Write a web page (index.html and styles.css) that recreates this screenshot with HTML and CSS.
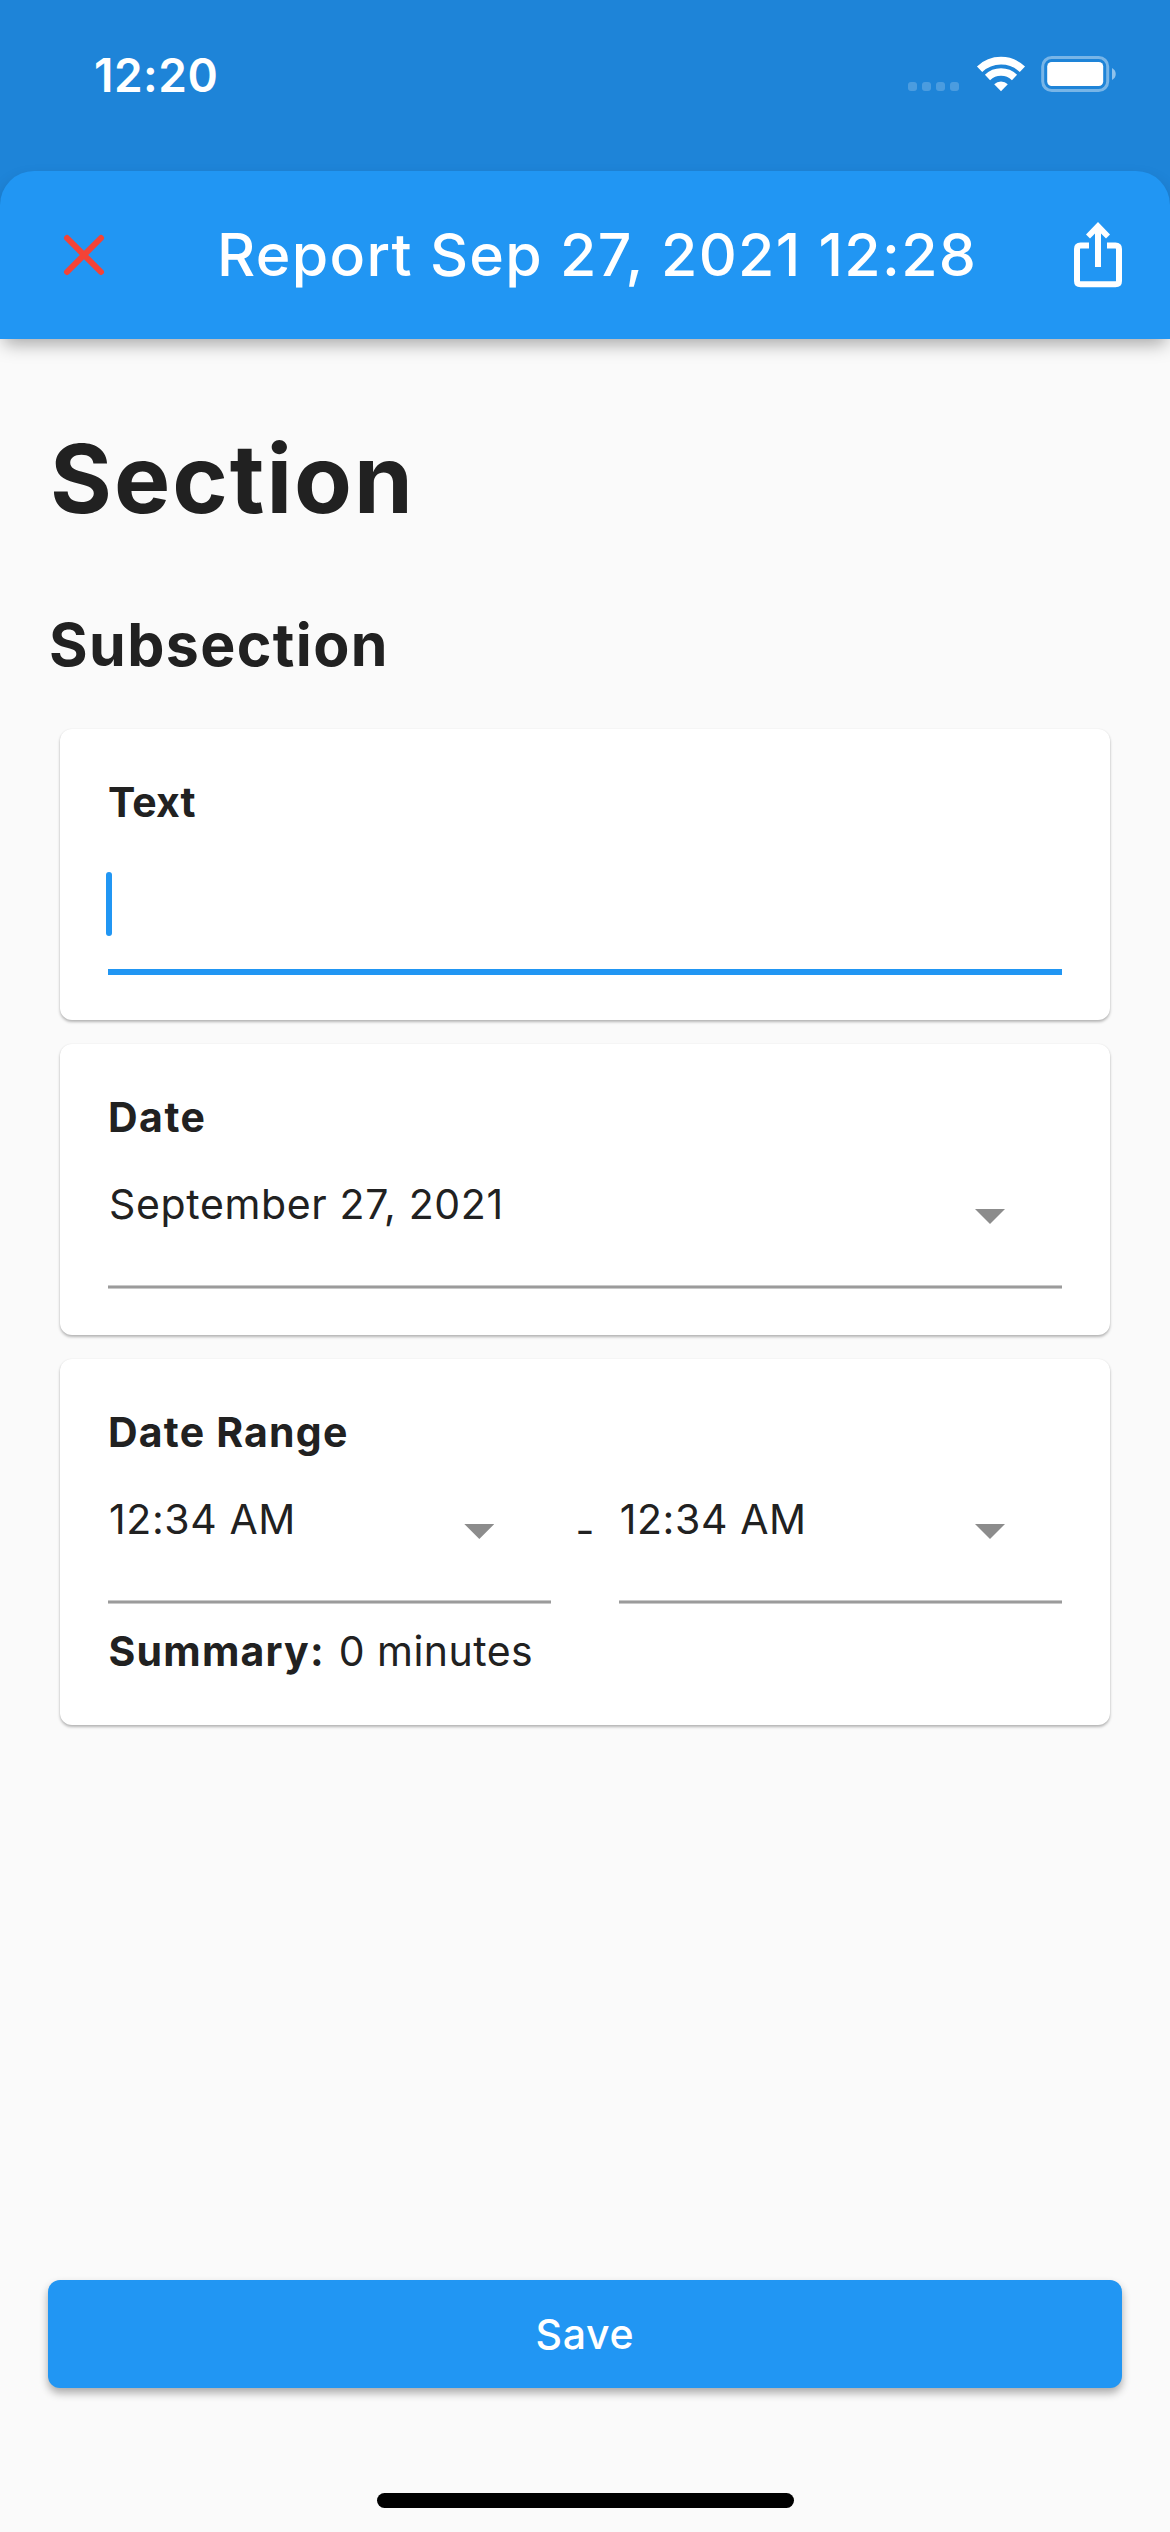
FILE: index.html
```html
<!DOCTYPE html>
<html lang="en">
<head>
<meta charset="utf-8">
<title>Report</title>
<link rel="stylesheet" href="styles.css">
</head>
<body>
<div class="screen">
  <div class="status-bar">
    <span class="clock">12:20</span>
    <div class="status-icons">
      <div class="signal"><i></i><i></i><i></i><i></i></div>
      <svg class="wifi" width="50" height="38" viewBox="0 0 50 38" fill="none" stroke="#fff">
        <path d="M3.6 14.2 A31 31 0 0 1 46.4 14.2" stroke-width="7.6"/>
        <path d="M11.5 22.5 A19.5 19.5 0 0 1 38.5 22.5" stroke-width="7.4"/>
        <path d="M18.2 29.3 A9.6 9.6 0 0 1 31.8 29.3 L25 36.2 Z" fill="#fff" stroke="none"/>
      </svg>
      <svg class="battery" width="76" height="38" viewBox="0 0 76 38">
        <rect x="1.7" y="2.5" width="65" height="33" rx="9" fill="none" stroke="#fff" stroke-opacity=".4" stroke-width="3"/>
        <rect x="6.2" y="7" width="56" height="24" rx="4.5" fill="#fff"/>
        <path d="M71 13 C76 15.5 76 22.5 71 25 Z" fill="#fff" fill-opacity=".5"/>
      </svg>
    </div>
  </div>
  <div class="sheet">
    <header class="app-bar">
      <svg class="close" width="44" height="44" viewBox="0 0 44 44" stroke="#f44336" stroke-width="6" stroke-linecap="round"><path d="M5 5 L39 39 M39 5 L5 39"/></svg>
      <h1 class="title">Report Sep 27, 2021 12:28</h1>
      <svg class="share" width="50" height="68" viewBox="0 0 50 68">
        <path d="M16 24.5 H7.5 Q4 24.5 4 28 V60 Q4 63.2 7.5 63.2 H42.5 Q46 63.2 46 60 V28 Q46 24.5 42.5 24.5 H34" fill="none" stroke="#fff" stroke-width="6"/>
        <path d="M25 1 L37 13.5 L33 17.5 L28 12.5 V46 H22 V12.5 L17 17.5 L13 13.5 Z" fill="#fff"/>
      </svg>
    </header>
    <main class="content">
      <h2 class="section">Section</h2>
      <h3 class="subsection">Subsection</h3>
      <div class="cards">
        <section class="card">
          <div class="label text-label">Text</div>
          <div class="field input"><span class="cursor"></span></div>
        </section>
        <section class="card">
          <div class="label date-label">Date</div>
          <div class="field select"><span class="value date-value">September 27, 2021</span><span class="arrow"></span></div>
        </section>
        <section class="card">
          <div class="label">Date Range</div>
          <div class="range">
            <div class="field select"><span class="value">12:34 AM</span><span class="arrow"></span></div>
            <span class="dash">-</span>
            <div class="field select"><span class="value">12:34 AM</span><span class="arrow"></span></div>
          </div>
          <div class="summary"><b>Summary:</b><span>0 minutes</span></div>
        </section>
      </div>
      <button class="save">Save</button>
      <div class="home-indicator"></div>
    </main>
  </div>
</div>
</body>
</html>
```
FILE: styles.css
```css
* { box-sizing: border-box; }
body { margin: 0; }
.screen {
  width: 1170px;
  height: 2532px;
  display: flex;
  flex-direction: column;
  overflow: hidden;
  background: linear-gradient(#1e84d8 300px, #fafafa 300px);
  color: #212121;
  font: 400 41px/48px Inter, "Liberation Sans", sans-serif;
}
.status-bar {
  height: 171px;
  flex: none;
  display: flex;
  justify-content: space-between;
  align-items: flex-start;
  padding: 50px 53px 0 94px;
  color: #fff;
}
.clock { font-size: 46px; font-weight: 600; line-height: 50px; letter-spacing: .5px; }
.status-icons { display: flex; padding-top: 5px; }
.signal { display: flex; gap: 5px; margin: 27px 17px 0 0; }
.signal i { width: 9px; height: 9px; border-radius: 3px; background: rgba(255, 255, 255, .2); }
.wifi { margin-right: 15px; }
.sheet { flex: 1; display: flex; flex-direction: column; }
.app-bar {
  height: 168px;
  flex: none;
  display: flex;
  align-items: center;
  padding: 0 47px 0 62px;
  border-radius: 34px 34px 0 0;
  background: #2196f3;
  color: #fff;
  box-shadow: 0 9px 18px -4px rgba(0, 0, 0, .34);
}
.title {
  flex: 1;
  margin: 0 0 0 111px;
  font-size: 59px;
  font-weight: 500;
  line-height: 70px;
  letter-spacing: 1.3px;
  white-space: nowrap;
}
.content { flex: 1; display: flex; flex-direction: column; padding: 84px 48px 24px; }
.section { margin: 0 2px; font-size: 94.5px; font-weight: 700; line-height: 112px; letter-spacing: 2px; }
.subsection { margin: 75px 1px 49px; font-size: 59px; font-weight: 700; line-height: 70px; letter-spacing: 1.4px; }
.cards { display: flex; flex-direction: column; gap: 24px; padding: 0 12px; }
.card {
  padding: 49px 48px 45px;
  border-radius: 12px;
  background: #fff;
  box-shadow: 0 2px 3px rgba(0, 0, 0, .28), 0 0 2px rgba(0, 0, 0, .06);
}
.label { margin-bottom: -1px; font-weight: 700; letter-spacing: 1.2px; }
.text-label { letter-spacing: .1px; }
.date-label { letter-spacing: 1.5px; }
.field { height: 149px; display: flex; justify-content: space-between; align-items: flex-start; }
.input { position: relative; height: 150px; border-bottom: 6px solid #2196f3; }
.cursor { position: absolute; left: -2px; top: 47px; width: 6px; height: 64px; border-radius: 3px; background: #2196f3; }
.select {
  padding: 39px 57px 0 0;
  margin-bottom: 1px;
  background: linear-gradient(#c9c9c9 1px, #9b9b9b 1px 3px, #c9c9c9 3px) bottom / 100% 4px no-repeat;
}
.value { margin-left: 1px; padding-top: 1px; letter-spacing: .6px; }
.date-value { letter-spacing: .65px; }
.arrow { width: 30px; height: 15px; margin-top: 30px; background: #8c8c8c; clip-path: polygon(0 0, 100% 0, 50% 100%); }
.range { display: flex; }
.range .field { flex: 1; margin-bottom: 0; }
.dash { width: 67.4px; padding-top: 51px; text-align: center; }
.summary { display: flex; gap: 14px; margin: 23px 0 5px .5px; letter-spacing: .45px; }
.summary b { letter-spacing: 1.2px; }
.save {
  height: 108px;
  margin-top: auto;
  padding: 0;
  border: 0;
  border-radius: 12px;
  background: #2196f3;
  color: #fff;
  font: 500 41px/48px Inter, sans-serif;
  letter-spacing: .7px;
  box-shadow: 0 5px 8px rgba(0, 0, 0, .32);
}
.home-indicator { width: 417px; height: 15px; margin: 105px auto 0; border-radius: 8px; background: #000; }
```
